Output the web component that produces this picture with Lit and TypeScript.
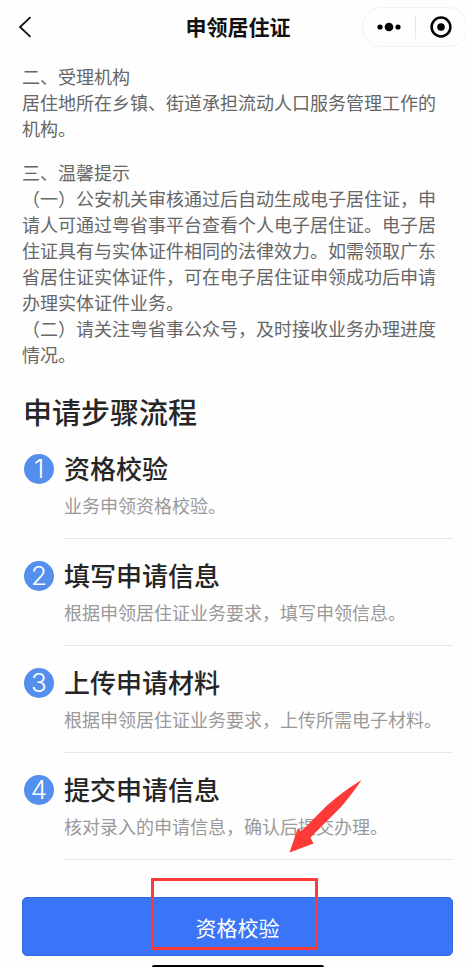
import { LitElement, html, css } from "lit";
import { customElement, property } from "lit/decorators.js";

interface Step {
  title: string;
  text: string;
}

const STEPS: Step[] = [
  { title: "资格校验", text: "业务申领资格校验。" },
  { title: "填写申请信息", text: "根据申领居住证业务要求，填写申领信息。" },
  { title: "上传申请材料", text: "根据申领居住证业务要求，上传所需电子材料。" },
  { title: "提交申请信息", text: "核对录入的申请信息，确认后提交办理。" },
];

@customElement("nav-bar")
class NavBar extends LitElement {
  @property() heading = "";

  static styles = css`
    :host {
      display: grid;
      grid-template-columns: 1fr auto 1fr;
      align-items: center;
      height: 54px;
      padding-left: 10px;
    }
    button {
      display: flex;
      align-items: center;
      justify-content: center;
      margin: 0;
      padding: 0;
      border: 0;
      background: none;
      color: #111;
      cursor: pointer;
    }
    .back {
      width: 30px;
      height: 40px;
    }
    .title {
      margin: 0;
      padding-bottom: 2px;
      font-size: 21px;
      line-height: 30px;
      font-weight: 700;
      color: #111;
    }
    .capsule {
      justify-self: end;
      display: flex;
      align-items: center;
      box-sizing: border-box;
      width: 106px;
      height: 40px;
      margin-right: -2px;
      border: 1px solid #f2f2f2;
      border-radius: 20px;
    }
    .capsule button {
      flex: 1;
      height: 38px;
    }
    .rule {
      width: 1px;
      height: 24px;
      background: #e6e6e6;
    }
  `;

  render() {
    return html`
      <button class="back" aria-label="返回">
        <svg width="14" height="22" viewBox="0 0 14 22" fill="none" stroke="currentColor" stroke-width="1.8">
          <path d="M12.500 1.200 2 11l10.500 9.800" />
        </svg>
      </button>
      <h1 class="title">${this.heading}</h1>
      <div class="capsule">
        <button aria-label="更多">
          <svg width="24" height="10" viewBox="0 0 24 10" fill="#000">
            <circle cx="3" cy="5" r="2.6" />
            <circle cx="12" cy="5" r="4.3" />
            <circle cx="21" cy="5" r="2.6" />
          </svg>
        </button>
        <span class="rule"></span>
        <button aria-label="关闭">
          <svg width="22" height="22" viewBox="0 0 22 22">
            <circle cx="11" cy="11" r="9.4" fill="none" stroke="#000" stroke-width="2.5" />
            <circle cx="11" cy="11" r="3.8" fill="#000" />
          </svg>
        </button>
      </div>
    `;
  }
}

@customElement("app-root")
class AppRoot extends LitElement {
  static styles = css`
    :host {
      display: flex;
      flex-direction: column;
      min-height: 100vh;
      overflow: hidden;
      background: #fefefe;
      font-family: "Noto Sans CJK SC", "Noto Sans", sans-serif;
      text-spacing-trim: space-all;
    }
    main {
      padding: 9px 13px 0 22px;
    }
    .notice {
      margin-bottom: 18px;
      font-size: 18px;
      line-height: 26px;
      color: #666;
    }
    .notice h2,
    .notice p {
      margin: 0;
      font-size: 18px;
      font-weight: 400;
    }
    .heading {
      margin: 24px 0 19px;
      padding-left: 1px;
      font-size: 29px;
      line-height: 40px;
      font-weight: 500;
      color: #262626;
    }
    .steps {
      display: flex;
      flex-direction: column;
      gap: 18px;
      margin: 0;
      padding: 0;
      list-style: none;
    }
    .step {
      display: flex;
      align-items: flex-start;
      gap: 10px;
      padding-left: 2px;
    }
    .number {
      flex: none;
      width: 30px;
      height: 30px;
      margin-top: 4px;
      border-radius: 50%;
      background: #558fee;
      color: #fff;
      font-family: Inter, "Liberation Sans", sans-serif;
      font-size: 26px;
      font-weight: 300;
      line-height: 30px;
      text-align: center;
    }
    .body {
      flex: 1;
      padding-bottom: 20px;
      border-bottom: 1px solid #e6e6e6;
    }
    .body h3 {
      margin: 0 0 6px;
      font-size: 26px;
      line-height: 36px;
      font-weight: 500;
      color: #262626;
    }
    .body p {
      margin: 0;
      font-size: 18px;
      line-height: 26px;
      color: #999;
    }
    .action {
      position: relative;
      margin: 37px 13px 0 22px;
    }
    .submit {
      display: block;
      box-sizing: border-box;
      width: 100%;
      height: 59px;
      margin: 0;
      padding: 0;
      border: 1px solid #3169de;
      border-radius: 5px;
      background: #3a75f7;
      color: #fff;
      font-family: inherit;
      font-size: 21px;
      line-height: 30px;
      cursor: pointer;
    }
    .frame {
      position: absolute;
      top: -19px;
      left: calc(50% - 87px);
      box-sizing: border-box;
      width: 167px;
      height: 72px;
      border: 3px solid #fc3a38;
      pointer-events: none;
    }
    .arrow {
      position: absolute;
      top: -118px;
      left: calc(50% + 50px);
      pointer-events: none;
    }
    .bottom {
      display: flex;
      flex: 1;
      padding: 0 13px 0 22px;
    }
    .home {
      width: 172px;
      height: 2px;
      margin: auto auto 0;
      border-radius: 2px 2px 0 0;
      background: #000;
    }
  `;

  render() {
    return html`
      <nav-bar heading="申领居住证"></nav-bar>
      <main>
        <section class="notice">
          <h2>二、受理机构</h2>
          <p>居住地所在乡镇、街道承担流动人口服务管理工作的机构。</p>
        </section>
        <section class="notice">
          <h2>三、温馨提示</h2>
          <p>（一）公安机关审核通过后自动生成电子居住证，申请人可通过粤省事平台查看个人电子居住证。电子居住证具有与实体证件相同的法律效力。如需领取广东省居住证实体证件，可在电子居住证申领成功后申请办理实体证件业务。</p>
          <p>（二）请关注粤省事公众号，及时接收业务办理进度情况。</p>
        </section>
        <h2 class="heading">申请步骤流程</h2>
        <ol class="steps">
          ${STEPS.map(
            (step, i) => html`
              <li class="step">
                <span class="number">${i + 1}</span>
                <div class="body">
                  <h3>${step.title}</h3>
                  <p>${step.text}</p>
                </div>
              </li>
            `
          )}
        </ol>
      </main>
      <div class="action">
        <button class="submit">资格校验</button>
        <div class="frame"></div>
        <svg class="arrow" width="76" height="76" viewBox="0 0 76 76" aria-hidden="true">
          <path
            fill="#fc3a38"
            d="M1.500 73.500 9.800 49.300 13 52.500 39 26.500Q56 11.500 73.500 1Q65 14 53 28L22.500 58.500 25.500 64.500Z"
          />
        </svg>
      </div>
      <div class="bottom"><div class="home"></div></div>
    `;
  }
}
